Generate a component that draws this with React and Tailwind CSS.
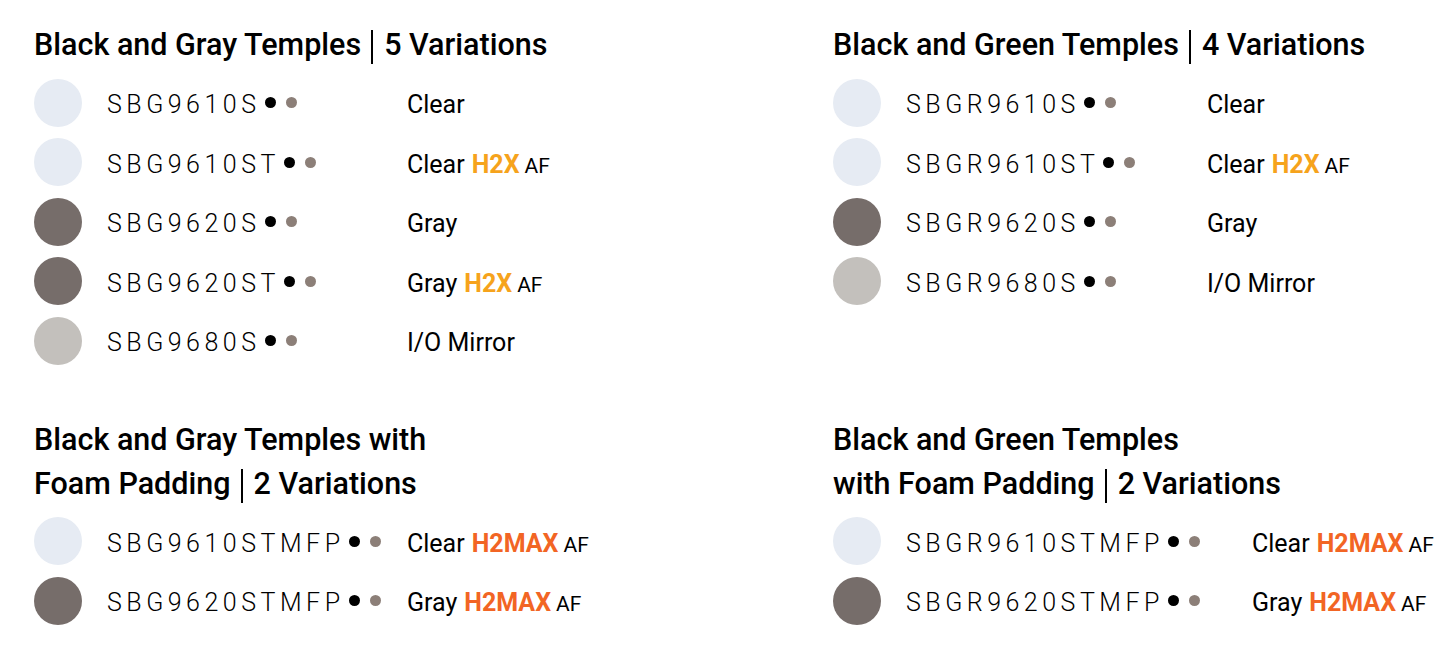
import React from "react";

const CLEAR = "bg-[#e6ebf3]";
const GRAY = "bg-[#766d6a]";
const MIRROR = "bg-[#c3c0bc]";

const sections = [
  {
    title: ["Black and Gray Temples | 5 Variations"],
    codeCol: "w-[300px]",
    items: [
      { lens: CLEAR, code: "SBG9610S", name: "Clear" },
      { lens: CLEAR, code: "SBG9610ST", name: "Clear", tag: "H2X" },
      { lens: GRAY, code: "SBG9620S", name: "Gray" },
      { lens: GRAY, code: "SBG9620ST", name: "Gray", tag: "H2X" },
      { lens: MIRROR, code: "SBG9680S", name: "I/O Mirror" },
    ],
  },
  {
    title: ["Black and Green Temples | 4 Variations"],
    codeCol: "w-[301px]",
    items: [
      { lens: CLEAR, code: "SBGR9610S", name: "Clear" },
      { lens: CLEAR, code: "SBGR9610ST", name: "Clear", tag: "H2X" },
      { lens: GRAY, code: "SBGR9620S", name: "Gray" },
      { lens: MIRROR, code: "SBGR9680S", name: "I/O Mirror" },
    ],
  },
  {
    title: ["Black and Gray Temples with", "Foam Padding | 2 Variations"],
    codeCol: "w-[300px]",
    items: [
      { lens: CLEAR, code: "SBG9610STMFP", name: "Clear", tag: "H2MAX" },
      { lens: GRAY, code: "SBG9620STMFP", name: "Gray", tag: "H2MAX" },
    ],
  },
  {
    title: ["Black and Green Temples", "with Foam Padding | 2 Variations"],
    codeCol: "w-[346px]",
    items: [
      { lens: CLEAR, code: "SBGR9610STMFP", name: "Clear", tag: "H2MAX" },
      { lens: GRAY, code: "SBGR9620STMFP", name: "Gray", tag: "H2MAX" },
    ],
  },
];

function Title({ lines }) {
  return (
    <h2 className="text-[30.5px] leading-[44px] font-medium text-black">
      {lines.map((line) => {
        const [left, right] = line.split(" | ");
        return (
          <div key={line}>
            {right === undefined ? (
              left
            ) : (
              <>
                {left}
                <span className="inline-block w-[2px] h-[34px] bg-black align-[-9px] ml-[10px] mr-[11px]"></span>
                {right}
              </>
            )}
          </div>
        );
      })}
    </h2>
  );
}

function Row({ item, codeCol }) {
  return (
    <div className="flex items-center h-[59.5px]">
      <div className={`w-[48px] h-[48px] rounded-full shrink-0 ${item.lens}`}></div>
      <div className={`ml-[25px] flex items-center shrink-0 ${codeCol}`}>
        <span className="text-[25px] tracking-[0.18em] text-black font-light mt-[4px]">{item.code}</span>
        <span className="w-[11px] h-[11px] rounded-full bg-black ml-[4px]"></span>
        <span className="w-[11px] h-[11px] rounded-full bg-[#8c7f78] ml-[10px]"></span>
      </div>
      <div className="text-[25px] text-black flex items-baseline mt-[4px]">
        <span>{item.name}</span>
        {item.tag && (
          <>
            <span
              className={
                item.tag === "H2X"
                  ? "ml-[7px] font-bold text-[#f6a31c]"
                  : "ml-[7px] font-bold text-[#f26524]"
              }
            >
              {item.tag}
            </span>
            <span className="ml-[5px] text-[21px]">AF</span>
          </>
        )}
      </div>
    </div>
  );
}

function Section({ section }) {
  return (
    <div>
      <Title lines={section.title} />
      <div className="mt-[6px] flex flex-col">
        {section.items.map((item) => (
          <Row key={item.code} item={item} codeCol={section.codeCol} />
        ))}
      </div>
    </div>
  );
}

export default function App() {
  return (
    <div
      className="w-[1452px] h-[660px] bg-white pl-[34px] pt-[23px] overflow-hidden"
      style={{ fontFamily: "Roboto, 'Liberation Sans', sans-serif" }}
    >
      <div className="grid grid-cols-[799px_1fr] gap-y-[47px]">
        {sections.map((s) => (
          <Section key={s.title[0]} section={s} />
        ))}
      </div>
    </div>
  );
}
